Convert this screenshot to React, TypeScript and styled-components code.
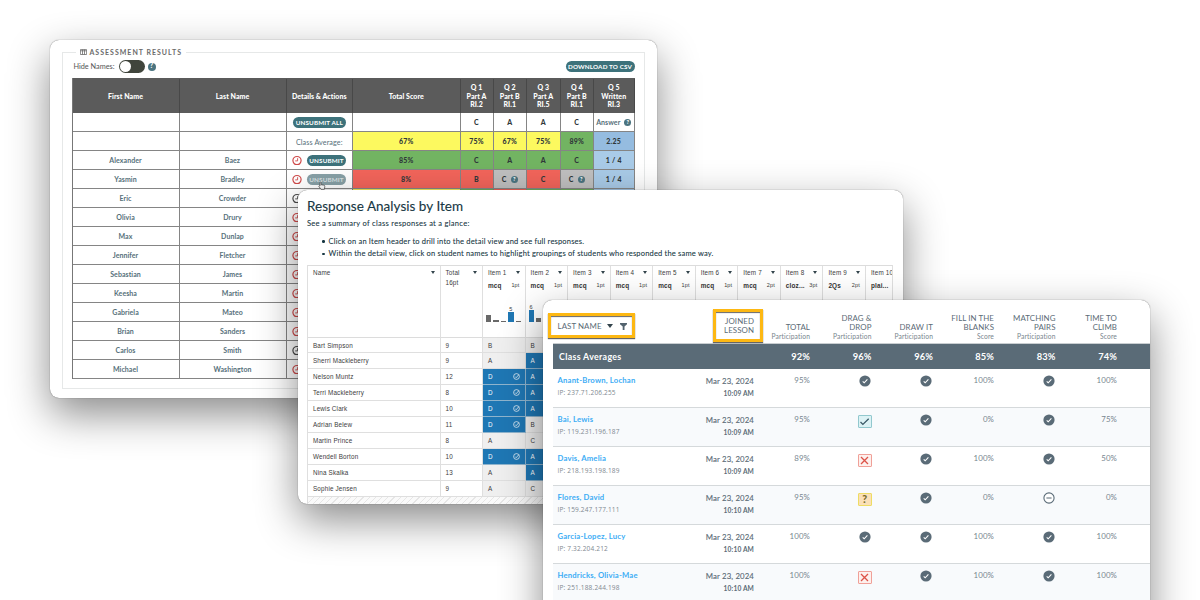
import React from "react";
import styled, { createGlobalStyle, css } from "styled-components";

const GlobalStyle = createGlobalStyle`
  *, *::before, *::after { box-sizing: border-box; }
  body { margin: 0; background: #fff; }
  h2, p, ul { margin: 0; padding: 0; font-weight: inherit; }
`;

const Stage = styled.main`
  position: relative;
  width: 1200px;
  height: 600px;
  overflow: hidden;
  background: #fff;
`;

const Window = styled.section<{ $x: number; $y: number; $w: number; $h: number }>`
  position: absolute;
  left: ${(p) => p.$x}px;
  top: ${(p) => p.$y}px;
  width: ${(p) => p.$w}px;
  height: ${(p) => p.$h}px;
  border-radius: 9px;
  background: #fff;
  box-shadow: 0 0 1px rgba(0, 0, 0, 0.65), 0 16px 42px rgba(0, 0, 0, 0.46);
`;

const Clip = styled.div`
  height: 100%;
  border-radius: inherit;
  overflow: hidden;
`;

/* ---------- Assessment results ---------- */

const AssessmentBody = styled(Clip)`
  padding: 7px 12px 9px 11.5px;
  font-family: Lato, "Liberation Sans", sans-serif;
  font-size: 7px;
  color: #3f5a62;
`;

const Fieldset = styled.fieldset`
  margin: 0;
  padding: 0 9.5px 0 9px;
  height: 342px;
  min-width: 0;
  border: 1px solid #e6e8e8;
`;

const Legend = styled.legend`
  display: flex;
  align-items: center;
  gap: 3px;
  height: 10px;
  margin-left: 4px;
  padding: 0 4px;
  font-size: 7px;
  font-weight: 700;
  letter-spacing: 1px;
  color: #6b6b6b;
`;

const Toolbar = styled.div`
  display: flex;
  align-items: center;
  height: 15px;
  margin-top: 2px;
  padding-left: 2px;
  font-size: 7.3px;
  color: #555;
`;

const Toggle = styled.span`
  display: flex;
  width: 26px;
  height: 13px;
  margin: 0 3px 0 4px;
  padding: 1px;
  border-radius: 7px;
  background: #40453c;
  &::before {
    content: "";
    width: 11px;
    height: 11px;
    border-radius: 50%;
    background: #fff;
  }
`;

const Pill = styled.span<{ $w: number; $dim?: boolean }>`
  display: flex;
  align-items: center;
  justify-content: center;
  width: ${(p) => p.$w}px;
  height: 11.5px;
  border-radius: 6px;
  background: ${(p) => (p.$dim ? "#87a0a6" : "#3d727b")};
  color: ${(p) => (p.$dim ? "#d9e1e3" : "#fff")};
  font-size: 6.3px;
  font-weight: 700;
  letter-spacing: 0.14px;
  white-space: nowrap;
`;

const PushRight = styled.div`
  margin-left: auto;
`;

const Help = styled.span<{ $size?: number }>`
  display: inline-flex;
  flex: none;
  align-items: center;
  justify-content: center;
  width: ${(p) => p.$size ?? 7}px;
  height: ${(p) => p.$size ?? 7}px;
  border-radius: 50%;
  background: #4b7480;
  color: #fff;
  font-size: ${(p) => (p.$size ?? 7) - 1.5}px;
  line-height: 1;
  letter-spacing: 0;
  font-weight: 900;
`;

const gradeColumns = "107px 107px 66.5px 107.5px 33px 33.5px 33.5px 33.5px 1fr";

const GradeGrid = styled.div`
  width: 563px;
  margin-top: 4px;
  border-left: 1px solid #777;
`;

const GradeHead = styled.div`
  display: grid;
  grid-template-columns: ${gradeColumns};
  height: 35px;
  padding-top: 1px;
  background: #5b5b5b;
  color: #fff;
  font-weight: 900;
  line-height: 8.7px;
  text-align: center;
`;

const GradeHeadCell = styled.div`
  display: flex;
  align-items: center;
  justify-content: center;
  border-right: 1px solid #484848;
  white-space: pre-line;
  letter-spacing: 0.05px;
`;

const GradeRow = styled.div`
  display: grid;
  grid-template-columns: ${gradeColumns};
  height: 18.98px;
`;

const tones = {
  plain: "transparent",
  yellow: "#fcf95f",
  green: "#72b462",
  red: "#f3655b",
  grey: "#c0c0c0",
  blue: "#a9cbe8",
  deepBlue: "#95bce0",
};
type Tone = keyof typeof tones;

const GradeCell = styled.div<{ $tone?: Tone; $strong?: boolean; $low?: boolean }>`
  display: flex;
  align-items: center;
  justify-content: center;
  gap: 4px;
  padding-top: ${(p) => (p.$low ? "4px" : "1px")};
  border-right: 1px solid #858585;
  border-bottom: 1px solid #858585;
  background: ${(p) => tones[p.$tone ?? "plain"]};
  font-weight: ${(p) => (p.$strong ? 900 : 700)};
  color: ${(p) => (p.$strong ? "#30383a" : "#56707a")};
  letter-spacing: ${(p) => (p.$strong ? "0.25px" : "0.06px")};
`;

const Plain = styled.span`
  font-weight: 400;
  font-size: 7.2px;
  letter-spacing: 0.1px;
`;

const Actions = styled.div`
  display: flex;
  align-items: center;
  gap: 5px;
  padding: 1px 0 0 5.5px;
  border-right: 1px solid #858585;
  border-bottom: 1px solid #858585;
`;

const ClockIcon = ({ dark }: { dark?: boolean }) => (
  <svg width="10" height="10" viewBox="0 0 10 10" fill="none" stroke={dark ? "#4a4a4a" : "#cf4a4a"} strokeWidth="1.2">
    <circle cx="5" cy="5.6" r="4.1" />
    <path d="M5.6 3.2V5.9H3.2" strokeWidth="0.9" />
  </svg>
);

const TableIcon = () => (
  <svg width="7" height="6" viewBox="0 0 7 6" fill="none" stroke="#6b6b6b" strokeWidth="0.8">
    <path d="M0.4 0.6h6.2v4.9H0.4zM2.5 0.6v4.9M4.5 0.6v4.9M0.4 1.8h6.2" />
  </svg>
);

const Pointer = styled.svg`
  position: absolute;
  left: 268px;
  top: 141px;
`;

const students: [string, string, boolean?][] = [
  ["Olivia", "Drury"],
  ["Max", "Dunlap"],
  ["Jennifer", "Fletcher"],
  ["Sebastian", "James"],
  ["Keesha", "Martin"],
  ["Gabriela", "Mateo"],
  ["Brian", "Sanders"],
  ["Carlos", "Smith", true],
  ["Michael", "Washington"],
];

type Score = [string, Tone, boolean?];
const scored: { first: string; last: string; dim?: boolean; scores: Score[] }[] = [
  {
    first: "Alexander",
    last: "Baez",
    scores: [["85%", "green"], ["C", "green"], ["A", "green"], ["A", "green"], ["C", "green"], ["1 / 4", "blue"]],
  },
  {
    first: "Yasmin",
    last: "Bradley",
    dim: true,
    scores: [["8%", "red"], ["B", "red"], ["C", "grey", true], ["C", "red"], ["C", "grey", true], ["1 / 4", "blue"]],
  },
];
const classAverage: Score[] = [
  ["67%", "yellow"],
  ["75%", "yellow"],
  ["67%", "yellow"],
  ["75%", "yellow"],
  ["89%", "green"],
  ["2.25", "deepBlue"],
];
const ericTones: Tone[] = ["yellow", "green", "red", "green", "green", "blue"];

const Scores = ({ items }: { items: Score[] }) => (
  <>
    {items.map(([text, tone, help], i) => (
      <GradeCell key={i} $tone={tone} $strong>
        {text}
        {help && <Help>?</Help>}
      </GradeCell>
    ))}
  </>
);

const Assessment = () => (
  <Window $x={50} $y={40} $w={607} $h={358}>
    <AssessmentBody>
      <Fieldset>
        <Legend>
          <TableIcon />
          ASSESSMENT RESULTS
        </Legend>
        <Toolbar>
          Hide Names:
          <Toggle />
          <Help $size={8}>?</Help>
          <PushRight>
            <Pill $w={69}>DOWNLOAD TO CSV</Pill>
          </PushRight>
        </Toolbar>
        <GradeGrid>
          <GradeHead>
            {["First Name", "Last Name", "Details & Actions", "Total Score", "Q 1\nPart A\nRI.2", "Q 2\nPart B\nRI.1", "Q 3\nPart A\nRI.5", "Q 4\nPart B\nRI.1", "Q 5\nWritten\nRI.3"].map((h) => (
              <GradeHeadCell key={h}>{h}</GradeHeadCell>
            ))}
          </GradeHead>
          <GradeRow>
            <GradeCell />
            <GradeCell />
            <GradeCell>
              <Pill $w={53}>UNSUBMIT ALL</Pill>
            </GradeCell>
            <GradeCell />
            {["C", "A", "A", "C"].map((a, i) => (
              <GradeCell key={i} $strong>{a}</GradeCell>
            ))}
            <GradeCell>
              Answer <Help>?</Help>
            </GradeCell>
          </GradeRow>
          <GradeRow>
            <GradeCell />
            <GradeCell />
            <GradeCell $low>
              <Plain>Class Average:</Plain>
            </GradeCell>
            <Scores items={classAverage} />
          </GradeRow>
          {scored.map((s) => (
            <GradeRow key={s.first}>
              <GradeCell>{s.first}</GradeCell>
              <GradeCell>{s.last}</GradeCell>
              <Actions>
                <ClockIcon />
                <Pill $w={39} $dim={s.dim}>UNSUBMIT</Pill>
              </Actions>
              <Scores items={s.scores} />
            </GradeRow>
          ))}
          <GradeRow>
            <GradeCell>Eric</GradeCell>
            <GradeCell>Crowder</GradeCell>
            <Actions>
              <ClockIcon dark />
            </Actions>
            {ericTones.map((t, i) => (
              <GradeCell key={i} $tone={t} />
            ))}
          </GradeRow>
          {students.map(([first, last, dark]) => (
            <GradeRow key={first}>
              <GradeCell>{first}</GradeCell>
              <GradeCell>{last}</GradeCell>
              <Actions>
                <ClockIcon dark={dark} />
              </Actions>
            </GradeRow>
          ))}
        </GradeGrid>
      </Fieldset>
    </AssessmentBody>
    <Pointer width="8" height="9" viewBox="0 0 8 9" fill="#fff" stroke="#444" strokeWidth="0.7">
      <path d="M2 1.2c.6-.5 1.1 0 1.1.6v1.9l2.7.5c.7.1 1.1.5 1 1.2L6.4 8.3H3L.9 5.5c-.3-.6.4-1 .9-.6L2 5z" />
    </Pointer>
  </Window>
);

/* ---------- Response analysis ---------- */

const ResponseBody = styled(Clip)`
  padding: 8px 10px 0 9px;
  font-family: Lato, "Liberation Sans", sans-serif;
  color: #173743;
`;

const Title = styled.h2`
  font-size: 13.5px;
  line-height: 17px;
  letter-spacing: 0.02px;
  font-weight: 400;
  -webkit-text-stroke: 0.12px #173743;
`;

const Copy = styled.p`
  margin-top: 3px;
  font-size: 7.5px;
  line-height: 12px;
  letter-spacing: 0.3px;
  -webkit-text-stroke: 0.08px #173743;
`;

const Bullets = styled.ul`
  margin-top: 5.5px;
  font-size: 7.5px;
  line-height: 12.3px;
  letter-spacing: 0.19px;
  list-style: none;
  -webkit-text-stroke: 0.08px #173743;
`;

const Bullet = styled.li`
  display: flex;
  align-items: center;
  gap: 4px;
  padding-left: 15px;
  white-space: nowrap;
  &::before {
    content: "";
    width: 2.5px;
    height: 2.5px;
    border-radius: 50%;
    background: #173743;
  }
`;

const ItemTable = styled.div`
  width: 586px;
  height: 240px;
  margin-top: 4.5px;
  border-left: 1px solid #dfdfdf;
  border-top: 1.5px solid #dcdcdc;
  border-right: 1px solid #dfdfdf;
  overflow: hidden;
  font-family: "Liberation Sans", Arial, sans-serif;
  font-size: 6.3px;
  letter-spacing: 0.17px;
  color: #3c3c3c;
`;

const itemColumns = "132.5px 42.5px repeat(10, 42.55px)";

const ItemHeadRow = styled.div`
  display: grid;
  grid-template-columns: ${itemColumns};
  height: 72px;
`;

const HeadCell = styled.div`
  display: flex;
  flex-direction: column;
  min-width: 0;
  padding: 2.5px 5px 0;
  border-right: 1px solid #dfdfdf;
  border-bottom: 1.5px solid #dcdcdc;
  white-space: nowrap;
`;

const Line = styled.div<{ $h?: number }>`
  display: flex;
  align-items: center;
  justify-content: space-between;
  height: ${(p) => p.$h ?? 9}px;
`;

const Kind = styled.b`
  font-size: 6.4px;
  color: #333;
`;

const Points = styled.span`
  font-size: 5.5px;
`;

const Caret = styled.i<{ $size?: number }>`
  border: ${(p) => p.$size ?? 2.2}px solid transparent;
  border-top: ${(p) => (p.$size ?? 2.2) * 1.5}px solid #33444c;
  border-bottom: 0;
`;

const Bars = styled.div`
  display: flex;
  align-items: flex-end;
  gap: 2px;
  height: 29px;
  margin-left: -2px;
  letter-spacing: 0;
`;

const Bar = styled.div<{ $h: number; $blue?: boolean }>`
  position: relative;
  flex: none;
  width: 5.4px;
  height: ${(p) => p.$h}px;
  background: ${(p) => (p.$blue ? "#1f77b4" : "#696969")};
`;

const BarLabel = styled.span`
  position: absolute;
  bottom: 100%;
  left: 1px;
  font-size: 5.5px;
  line-height: 6px;
`;

const ItemRow = styled.div`
  display: grid;
  grid-template-columns: ${itemColumns};
  height: 15.9px;
`;

const ItemCell = styled.div<{ $kind?: "answer" | "picked" }>`
  display: flex;
  align-items: center;
  justify-content: space-between;
  padding: 0 5px;
  border-right: 1px solid #dfdfdf;
  border-bottom: 1px solid #dfdfdf;
  white-space: nowrap;
  ${(p) =>
    p.$kind === "answer" &&
    css`
      background: #efefef;
    `}
  ${(p) =>
    p.$kind === "picked" &&
    css`
      background: #1f77b4;
      color: #fff;
      border-color: #8fb4cd;
    `}
`;

const Hatch = styled.div`
  height: 12px;
  background: repeating-linear-gradient(135deg, #fafafa 0 3.6px, #e6e6e6 3.6px 4.4px);
`;

const RingCheck = () => (
  <svg width="7" height="7" viewBox="0 0 7 7" fill="none" stroke="#fff" strokeWidth="0.7">
    <circle cx="3.5" cy="3.5" r="2.9" />
    <path d="M2.1 3.6l1.1 1.1 2.6-3" />
  </svg>
);

const items: [string, string, string][] = [
  ["Item 1", "mcq", "1pt"],
  ["Item 2", "mcq", "1pt"],
  ["Item 3", "mcq", "1pt"],
  ["Item 4", "mcq", "1pt"],
  ["Item 5", "mcq", "1pt"],
  ["Item 6", "mcq", "1pt"],
  ["Item 7", "mcq", "2pt"],
  ["Item 8", "cloz...", "3pt"],
  ["Item 9", "2Qs", "2pt"],
  ["Item 10", "plai...", ""],
];
const charts: { h: number; label?: string }[][] = [
  [{ h: 7.5 }, { h: 2.5 }, { h: 1 }, { h: 10, label: "5" }, { h: 1 }],
  [{ h: 12, label: "6" }, { h: 4 }, { h: 2 }],
];
const responses: [string, number, string, string][] = [
  ["Bart Simpson", 9, "B", "B"],
  ["Sherri Mackleberry", 9, "A", "A"],
  ["Nelson Muntz", 12, "D", "A"],
  ["Terri Mackleberry", 8, "D", "A"],
  ["Lewis Clark", 10, "D", "A"],
  ["Adrian Belew", 11, "D", "B"],
  ["Martin Prince", 8, "A", "C"],
  ["Wendell Borton", 10, "D", "A"],
  ["Nina Skalka", 13, "A", "A"],
  ["Sophie Jensen", 9, "A", "C"],
];

const ResponseAnalysis = () => (
  <Window $x={298} $y={190} $w={605} $h={313.5}>
    <ResponseBody>
      <Title>Response Analysis by Item</Title>
      <Copy>See a summary of class responses at a glance:</Copy>
      <Bullets>
        <Bullet>Click on an Item header to drill into the detail view and see full responses.</Bullet>
        <Bullet>Within the detail view, click on student names to highlight groupings of students who responded the same way.</Bullet>
      </Bullets>
      <ItemTable>
        <ItemHeadRow>
          <HeadCell>
            <Line>Name<Caret /></Line>
          </HeadCell>
          <HeadCell>
            <Line>Total<Caret /></Line>
            <Line $h={11.5}>16pt</Line>
          </HeadCell>
          {items.map(([name, kind, pts], i) => (
            <HeadCell key={name}>
              <Line>{name}{i < 9 && <Caret />}</Line>
              <Line $h={16}>
                <Kind>{kind}</Kind>
                <Points>{pts}</Points>
              </Line>
              {charts[i] && (
                <Bars>
                  {charts[i].map((b, j) => (
                    <Bar key={j} $h={b.h} $blue={!!b.label}>
                      {b.label && <BarLabel>{b.label}</BarLabel>}
                    </Bar>
                  ))}
                </Bars>
              )}
            </HeadCell>
          ))}
        </ItemHeadRow>
        {responses.map(([name, total, one, two]) => (
          <ItemRow key={name}>
            <ItemCell>{name}</ItemCell>
            <ItemCell>{total}</ItemCell>
            <ItemCell $kind={one === "D" ? "picked" : "answer"}>
              {one}
              {one === "D" && <RingCheck />}
            </ItemCell>
            <ItemCell $kind={two === "A" ? "picked" : "answer"}>{two}</ItemCell>
          </ItemRow>
        ))}
        <Hatch />
      </ItemTable>
    </ResponseBody>
  </Window>
);

/* ---------- Lesson participation ---------- */

const LessonBody = styled(Clip)`
  padding: 0 0 0 10px;
  font-family: Lato, "Open Sans", sans-serif;
  color: #5b6b76;
`;

const lessonColumns = "130px 71px 56px 61.5px 61.5px 61px 61.5px 61.5px";

const LessonHead = styled.div`
  display: grid;
  grid-template-columns: ${lessonColumns};
  align-items: end;
  height: 44px;
  border-bottom: 1px solid #c9ced1;
  padding-bottom: 2px;
  text-align: right;
`;

const Heading = styled.div`
  font-size: 7.9px;
  line-height: 9px;
  letter-spacing: 0.08px;
  white-space: pre-line;
`;

const Sub = styled.div`
  font-size: 6.7px;
  line-height: 9.5px;
  letter-spacing: 0.12px;
  color: #78858d;
`;

const Callout = styled.div<{ $w: number; $h: number; $right?: boolean }>`
  display: flex;
  align-items: center;
  justify-content: ${(p) => (p.$right ? "flex-end" : "flex-start")};
  width: ${(p) => p.$w}px;
  height: ${(p) => p.$h}px;
  margin: ${(p) => (p.$right ? "0 -8.5px -1px auto" : "0 0 3px -5.5px")};
  padding: ${(p) => (p.$right ? "0 5.5px 0 0" : "2px 0 0 7px")};
  gap: 5px;
  border: 3px solid #fdb813;
  box-shadow: 0 1px 1px rgba(0, 0, 0, 0.6), inset 0 1px 1px rgba(0, 0, 0, 0.6);
`;

const FunnelIcon = styled.svg`
  margin-left: 2.5px;
`;

const Averages = styled.div`
  display: grid;
  grid-template-columns: ${lessonColumns};
  align-items: center;
  height: 24.5px;
  background: #5a6b77;
  color: #fff;
  font-size: 9.3px;
  font-weight: 700;
  letter-spacing: 0.1px;
  text-align: right;
`;

const AveragesLabel = styled.div`
  grid-column: span 2;
  padding-left: 6px;
  text-align: left;
  font-size: 8.8px;
  letter-spacing: 0.34px;
`;

const LessonRow = styled.div<{ $alt: boolean }>`
  display: grid;
  grid-template-columns: ${lessonColumns};
  height: 39.05px;
  padding-top: 6.5px;
  border-bottom: 1px solid #d5d9db;
  background: ${(p) => (p.$alt ? "#f8fafc" : "#fff")};
  text-align: right;
`;

const Person = styled.div`
  padding-left: 4.5px;
  text-align: left;
`;

const PersonName = styled.div`
  font-size: 7.7px;
  line-height: 10px;
  font-weight: 700;
  letter-spacing: 0.19px;
  white-space: nowrap;
  color: #3dadf5;
`;

const Address = styled.div`
  margin-top: 2.5px;
  font-family: "Open Sans", "Noto Sans", sans-serif;
  font-size: 6.5px;
  line-height: 9px;
  letter-spacing: 0.17px;
  color: #808890;
`;

const Joined = styled.div`
  padding-top: 0.7px;
`;

const When = styled.div`
  font-size: 7.8px;
  line-height: 10px;
  letter-spacing: 0.13px;
  white-space: nowrap;
  -webkit-text-stroke: 0.12px #5b6b76;
`;

const Time = styled.div`
  margin-top: 3px;
  font-size: 6.6px;
  line-height: 9px;
  letter-spacing: 0.15px;
  font-weight: 700;
`;

const Result = styled.div`
  font-size: 7.9px;
  line-height: 10px;
  letter-spacing: 0.1px;
  color: #788790;
`;

const IconSlot = styled.div<{ $box?: boolean }>`
  display: flex;
  justify-content: flex-end;
  align-items: flex-start;
  padding-right: ${(p) => (p.$box ? 0 : 1)}px;
`;

const MarkBox = styled.span<{ $kind: string }>`
  display: flex;
  align-items: center;
  justify-content: center;
  width: 13.5px;
  height: 13.5px;
  margin-top: 0.5px;
  border: 1px solid;
  border-radius: 1px;
  font-size: 10.5px;
  line-height: 10px;
  font-weight: 900;
  ${(p) => p.$kind === "check" && "background:#dcf2f5;border-color:#92c8ce;color:#3b5a68;"}
  ${(p) => p.$kind === "cross" && "background:#fdf0ed;border-color:#f0a098;color:#dc5247;"}
  ${(p) => p.$kind === "query" && "background:#fae0b8;border-color:#eedc63;color:#776a2b;"}
`;

const Mark = ({ kind }: { kind: string }) => {
  if (kind === "done" || kind === "minus") {
    const done = kind === "done";
    return (
      <IconSlot>
        <svg width="12" height="12" viewBox="0 0 12 12" fill="none">
          <circle cx="6" cy="6" r={done ? 5.6 : 5.1} fill={done ? "#5a6b77" : "#fff"} stroke={done ? "none" : "#5a6b77"} strokeWidth="1.1" />
          {done ? (
            <path d="M3.7 6.3l1.5 1.5 3.2-3.4" stroke="#fff" strokeWidth="1.1" />
          ) : (
            <path d="M3.4 6h5.2" stroke="#5a6b77" strokeWidth="1.2" />
          )}
        </svg>
      </IconSlot>
    );
  }
  return (
    <IconSlot $box>
      <MarkBox $kind={kind}>
        {kind === "query" ? (
          "?"
        ) : (
          <svg width="11" height="11" viewBox="0 0 11 11" fill="none" stroke="currentColor" strokeWidth="1.3">
            <path d={kind === "check" ? "M1.5 6l2.4 2.4L9.7 2.8" : "M2 2l7 7M9 2L2 9"} />
          </svg>
        )}
      </MarkBox>
    </IconSlot>
  );
};

const lessonHeads: [string, string, string][] = [
  ["TOTAL", "Participation", "92%"],
  ["DRAG &\nDROP", "Participation", "96%"],
  ["DRAW IT", "Participation", "96%"],
  ["FILL IN THE\nBLANKS", "Score", "85%"],
  ["MATCHING\nPAIRS", "Participation", "83%"],
  ["TIME TO\nCLIMB", "Score", "74%"],
];

const learners: { name: string; ip: string; time: string; cells: string[] }[] = [
  { name: "Anant-Brown, Lochan", ip: "237.71.206.255", time: "10:09 AM", cells: ["95%", "done", "done", "100%", "done", "100%"] },
  { name: "Bai, Lewis", ip: "119.231.196.187", time: "10:09 AM", cells: ["95%", "check", "done", "0%", "done", "75%"] },
  { name: "Davis, Amelia", ip: "218.193.198.189", time: "10:09 AM", cells: ["89%", "cross", "done", "100%", "done", "50%"] },
  { name: "Flores, David", ip: "159.247.177.111", time: "10:10 AM", cells: ["95%", "query", "done", "0%", "minus", "0%"] },
  { name: "Garcia-Lopez, Lucy", ip: "7.32.204.212", time: "10:10 AM", cells: ["100%", "done", "done", "100%", "done", "100%"] },
  { name: "Hendricks, Olivia-Mae", ip: "251.188.244.198", time: "10:10 AM", cells: ["100%", "cross", "done", "100%", "done", "100%"] },
];

const Lesson = () => (
  <Window $x={543} $y={300} $w={607} $h={340}>
    <LessonBody>
      <LessonHead>
        <Callout $w={87} $h={25.5}>
          <Heading>LAST NAME</Heading>
          <Caret $size={3.3} />
          <FunnelIcon width="7" height="7" viewBox="0 0 7 7" fill="#53636e">
            <path d="M0 0h7v1.3L4.5 3.4V7H2.7V3.4L0 1.3z" />
          </FunnelIcon>
        </Callout>
        <Callout $w={50} $h={33} $right>
          <Heading>{"JOINED\nLESSON"}</Heading>
        </Callout>
        {lessonHeads.map(([title, sub]) => (
          <div key={title}>
            <Heading>{title}</Heading>
            <Sub>{sub}</Sub>
          </div>
        ))}
      </LessonHead>
      <Averages>
        <AveragesLabel>Class Averages</AveragesLabel>
        {lessonHeads.map(([title, , avg]) => (
          <div key={title}>{avg}</div>
        ))}
      </Averages>
      {learners.map((l, i) => (
        <LessonRow key={l.name} $alt={i % 2 === 1}>
          <Person>
            <PersonName>{l.name}</PersonName>
            <Address>IP: {l.ip}</Address>
          </Person>
          <Joined>
            <When>Mar 23, 2024</When>
            <Time>{l.time}</Time>
          </Joined>
          {l.cells.map((c, j) => (c.endsWith("%") ? <Result key={j}>{c}</Result> : <Mark key={j} kind={c} />))}
        </LessonRow>
      ))}
    </LessonBody>
  </Window>
);

export default function App() {
  return (
    <>
      <GlobalStyle />
      <Stage>
        <Assessment />
        <ResponseAnalysis />
        <Lesson />
      </Stage>
    </>
  );
}
